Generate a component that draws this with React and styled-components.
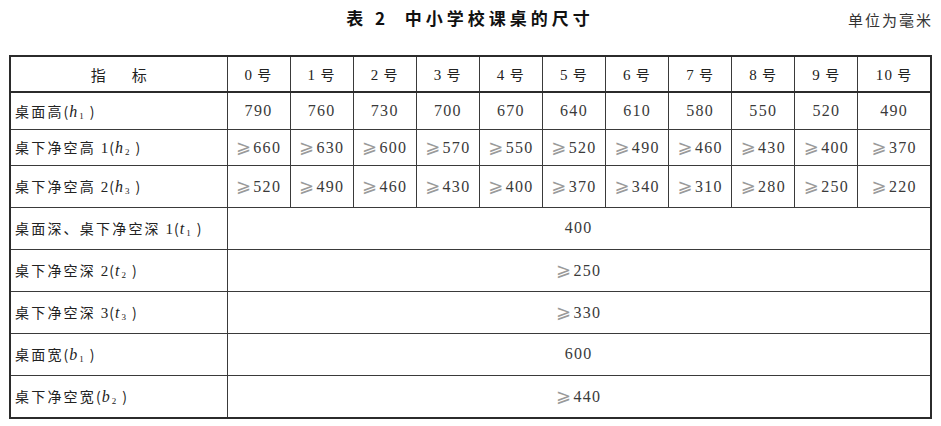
import React from 'react';
import styled, { createGlobalStyle } from 'styled-components';

const GlobalStyle = createGlobalStyle`
  html, body {
    margin: 0;
    padding: 0;
    background: #fff;
  }
  body {
    font-family: "Liberation Serif", "Noto Sans CJK SC", serif;
    color: #222;
  }
`;

const Page = styled.div`
  width: 941px;
  padding: 0 10px 0 9px;
  box-sizing: border-box;
`;

const Caption = styled.div`
  display: grid;
  grid-template-columns: 1fr auto 1fr;
  align-items: center;
  height: 55px;
  padding-bottom: 20px;
  box-sizing: border-box;
`;

const Title = styled.h1`
  grid-column: 2;
  margin: 0;
  font-family: "Noto Sans CJK SC", sans-serif;
  font-size: 17px;
  font-weight: 700;
  letter-spacing: 4px;
  color: #111;
  white-space: pre;
`;

const Unit = styled.div`
  grid-column: 3;
  justify-self: end;
  font-family: "Noto Sans CJK SC", sans-serif;
  font-size: 15px;
  letter-spacing: 2px;
  color: #333;
  margin-right: -2px;
  padding-top: 4px;
`;

const Sheet = styled.table`
  width: 922px;
  table-layout: fixed;
  border-collapse: collapse;
  border: 2px solid #2b2b2b;
`;

const Row = styled.tr`
  height: ${p => p.$h}px;
`;

const HeadRow = styled.tr`
  height: 36px;
  border-bottom: 2px solid #2b2b2b;
`;

const Cell = styled.td`
  border: 1px solid #3a3a3a;
  padding: 0;
  text-align: center;
  vertical-align: middle;
  font-size: 16px;
  letter-spacing: 1.3px;
  color: #3a3a3a;
  white-space: nowrap;
`;

const HeadCell = styled(Cell).attrs({ as: 'th' })`
  font-weight: 400;
  font-size: 15px;
  color: #222;
`;

const Label = styled(Cell)`
  text-align: left;
  padding-left: 4px;
  font-family: "Noto Sans CJK SC", sans-serif;
  font-size: 14px;
  letter-spacing: 2.2px;
  color: #222;
`;

const Num = styled.span`
  font-family: "Liberation Serif", serif;
  font-size: 15px;
  letter-spacing: 1px;
`;

const Paren = styled.span`
  letter-spacing: 0;
`;

const Var = styled.i`
  font-family: "Liberation Serif", serif;
  font-size: 16px;
  letter-spacing: 0;
  margin-left: 1px;
`;

const Sub = styled.sub`
  font-family: "Liberation Serif", serif;
  font-size: 9px;
  letter-spacing: 0;
  vertical-align: -2px;
  margin-left: 2px;
  margin-right: 6px;
`;

const Hao = styled.span`
  font-family: "Noto Sans CJK SC", sans-serif;
  font-size: 14px;
  margin-left: 4px;
`;

const Heading = styled.span`
  font-family: "Noto Sans CJK SC", sans-serif;
  font-size: 15px;
  letter-spacing: 0;
  & + & {
    margin-left: 26px;
  }
`;

const Geq = styled.span`
  font-family: "DejaVu Serif", "DejaVu Sans", serif;
  font-size: 18px;
  line-height: 1;
  color: #9a9a9a;
  margin-right: 1px;
`;

const sizes = Array.from({ length: 11 }, (_, i) => i);

const Value = ({ v }) =>
  typeof v === 'string' && v.startsWith('>') ? (
    <>
      <Geq>⩾</Geq>
      {v.slice(1)}
    </>
  ) : (
    v
  );

const LabelText = ({ name, num, sym, idx }) => (
  <>
    {name}
    {num && <Num> {num}</Num>}
    <Paren>(</Paren>
    <Var>{sym}</Var>
    <Sub>{idx}</Sub>
    <Paren>)</Paren>
  </>
);

const perSize = [
  { name: '桌面高', sym: 'h', idx: 1, h: 37, values: [790, 760, 730, 700, 670, 640, 610, 580, 550, 520, 490] },
  { name: '桌下净空高', num: '1', sym: 'h', idx: 2, h: 36, values: [660, 630, 600, 570, 550, 520, 490, 460, 430, 400, 370].map(n => '>' + n) },
  { name: '桌下净空高', num: '2', sym: 'h', idx: 3, h: 42, values: [520, 490, 460, 430, 400, 370, 340, 310, 280, 250, 220].map(n => '>' + n) },
];

const shared = [
  { name: '桌面深、桌下净空深', num: '1', sym: 't', idx: 1, value: '400', h: 42 },
  { name: '桌下净空深', num: '2', sym: 't', idx: 2, value: '>250', h: 42 },
  { name: '桌下净空深', num: '3', sym: 't', idx: 3, value: '>330', h: 42 },
  { name: '桌面宽', sym: 'b', idx: 1, value: '600', h: 42 },
  { name: '桌下净空宽', sym: 'b', idx: 2, value: '>440', h: 43 },
];

export default function App() {
  return (
    <Page>
      <GlobalStyle />
      <Caption>
        <Title>{'表 2  中小学校课桌的尺寸'}</Title>
        <Unit>单位为毫米</Unit>
      </Caption>
      <Sheet>
        <colgroup>
          <col style={{ width: 217 }} />
          {sizes.slice(0, 10).map(i => (
            <col key={i} style={{ width: 63.1 }} />
          ))}
          <col style={{ width: 73 }} />
        </colgroup>
        <thead>
          <HeadRow>
            <HeadCell>
              <Heading>指</Heading>
              <Heading>标</Heading>
            </HeadCell>
            {sizes.map(i => (
              <HeadCell key={i}>
                {i}
                <Hao>号</Hao>
              </HeadCell>
            ))}
          </HeadRow>
        </thead>
        <tbody>
          {perSize.map((r, ri) => (
            <Row key={ri} $h={r.h}>
              <Label>
                <LabelText {...r} />
              </Label>
              {r.values.map((v, i) => (
                <Cell key={i}>
                  <Value v={v} />
                </Cell>
              ))}
            </Row>
          ))}
          {shared.map((r, ri) => (
            <Row key={ri} $h={r.h}>
              <Label>
                <LabelText {...r} />
              </Label>
              <Cell colSpan={11}>
                <Value v={r.value} />
              </Cell>
            </Row>
          ))}
        </tbody>
      </Sheet>
    </Page>
  );
}
